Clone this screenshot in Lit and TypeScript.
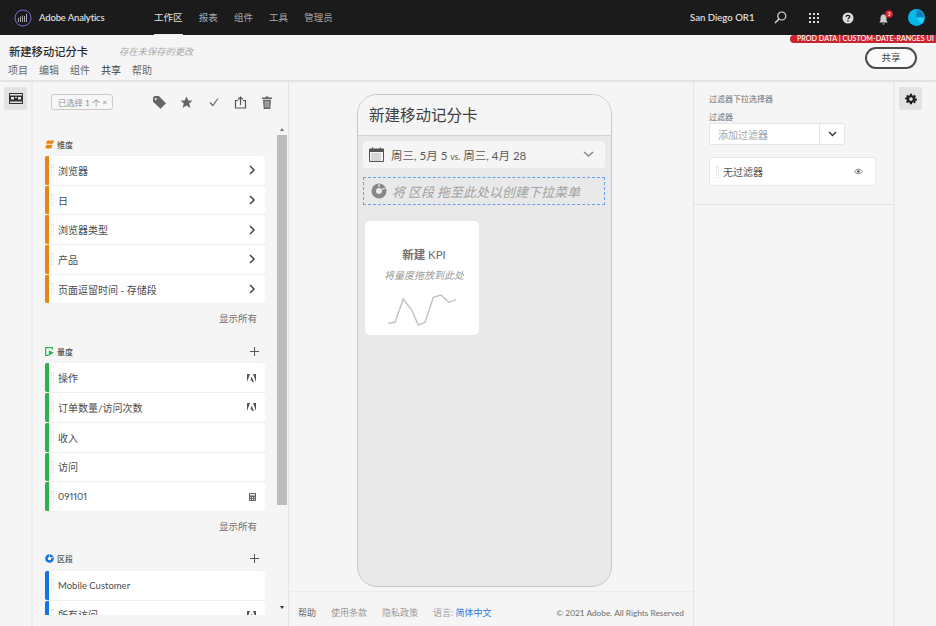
import { LitElement, html, css, svg } from "lit";
import { customElement } from "lit/decorators.js";

const chevron = html`<svg width="8" height="10" viewBox="0 0 8 10"><path d="M2 1l4 4-4 4" fill="none" stroke="#444" stroke-width="1.500"/></svg>`;
const adobe = html`<svg width="9" height="8" viewBox="0 0 9 8"><path d="M0 0h3L0 8zM9 0H6l3 8zM4.500 2.500L7 8H5.400l-.6-1.600H3.400z" fill="#555"/></svg>`;
const calc = html`<svg width="7" height="8" viewBox="0 0 7 8"><path d="M0 0h7v8H0z" fill="#666"/><path d="M1 1h5v1.500H1zM1 4h1v1H1zM3 4h1v1H3zM5 4h1v1H5zM1 6h1v1H1zM3 6h1v1H3zM5 6h1v1H5z" fill="#eee"/></svg>`;

const sections = [
  {
    name: "维度",
    color: "#e68619",
    add: false,
    more: true,
    items: ["浏览器", "日", "浏览器类型", "产品", "页面逗留时间 - 存储段"].map((t) => ({ t, icon: chevron })),
  },
  {
    name: "量度",
    color: "#2db24d",
    add: true,
    more: true,
    items: [
      { t: "操作", icon: adobe },
      { t: "订单数量/访问次数", icon: adobe },
      { t: "收入", icon: null },
      { t: "访问", icon: null },
      { t: "091101", icon: calc },
    ],
  },
  {
    name: "区段",
    color: "#1473e6",
    add: true,
    more: false,
    items: [
      { t: "Mobile Customer", icon: null },
      { t: "所有访问", icon: adobe },
    ],
  },
];

const sectionIcons = [
  svg`<path d="M3 .5h5.500c.5 0 .5 .5 .3 1L8 3.800H1.800C1 3.800 1 3 1.300 2.400 1.600 1.300 2 .5 3 .5z" fill="#e68619"/><path d="M1.500 4.800H7.500L6.800 7c-.3 1-1 1.500-2 1.500H1.500C.5 8.500 .2 8 .5 7z" fill="#e68619"/>`,
  svg`<path d="M7.500 2.500V.7H.7v7.600h3" fill="none" stroke="#2db24d" stroke-width="1.200"/><path d="M3.800 3.200L8.800 5.800 3.800 8.800z" fill="#2db24d"/>`,
  svg`<circle cx="4.500" cy="4.500" r="4.300" fill="#1473e6"/><circle cx="4.500" cy="4.500" r="1.700" fill="#fff"/><path d="M4.500 .5v2M8 3L6 4" stroke="#fff" stroke-width=".8"/>`,
];

// Latin labels run narrower than the CJK ones in the reference
const isLatin = (t: string) => /^[\x20-\x7e]+$/.test(t);

@customElement("app-root")
export class AppRoot extends LitElement {
  static styles = css`
    :host {
      display: block;
      width: 936px;
      height: 626px;
      overflow: hidden;
      position: relative;
      font-family: "Lato", "Noto Sans CJK SC", sans-serif;
      background: #f5f5f5;
      color: #4b4b4b;
    }
    .nav {
      height: 35px;
      background: #1b1b1b;
      display: flex;
      align-items: center;
      padding: 0 11px 0 14px;
      box-sizing: border-box;
      color: #a8a8a8;
    }
    .brand {
      color: #e8e8e8;
      font-size: 9.500px;
      letter-spacing: -0.150px;
      margin-left: 7px;
      width: 115px;
      font-weight: 500;
    }
    .tabs {
      display: flex;
      gap: 16.200px;
      height: 35px;
    }
    .tab {
      line-height: 35px;
      box-sizing: border-box;
      height: 35px;
      font-size: 9.500px;
    }
    .tab.on {
      color: #e3e3e3;
      border-bottom: 1px solid #eee;
    }
    .navright {
      margin-left: auto;
      display: flex;
      align-items: center;
      color: #e8e8e8;
    }
    .org {
      width: 84px;
      font-size: 9.600px;
      font-weight: 500;
    }
    .navright svg {
      display: block;
    }
    .navright .search {
      margin-right: 22px;
    }
    .navright .apps {
      margin-right: 23px;
    }
    .navright .qm {
      margin-right: 24px;
    }
    .navright .bell {
      margin-right: 14px;
    }
    .ribbon {
      position: absolute;
      right: 0;
      top: 35px;
      width: 146px;
      height: 8px;
      background: #c8242f;
      border-radius: 4px 0 0 4px;
      color: #fff;
      font-size: 7.200px;
      line-height: 8px;
      padding-left: 7px;
      box-sizing: border-box;
      white-space: nowrap;
      font-weight: 500;
    }
    .sub {
      height: 47px;
      box-sizing: border-box;
      border-bottom: 2px solid #e3e3e3;
      padding: 8px 8px 0 8px;
      display: flex;
      position: relative;
    }
    .titlerow {
      display: flex;
      align-items: center;
      height: 16px;
    }
    .title {
      font-size: 11.300px;
      font-weight: 500;
      color: #2c2c2c;
      margin-left: 1px;
      width: 110px;
    }
    .unsaved {
      font-size: 9.300px;
      font-style: italic;
      color: #a9a9a9;
    }
    .menu {
      display: flex;
      gap: 11px;
      font-size: 10px;
      color: #666;
      margin-top: 4px;
      line-height: 14px;
    }
    .menu .on {
      color: #3b3b3b;
    }
    .share {
      margin: 4px 11px 0 auto;
      width: 52px;
      height: 22px;
      box-sizing: border-box;
      border: 2px solid #4b4b4b;
      border-radius: 11px;
      font-size: 9.500px;
      line-height: 18px;
      text-align: center;
      color: #444;
      background: #fafafa;
    }
    .main {
      display: flex;
      height: 544px;
    }
    .rail {
      width: 33px;
      box-sizing: border-box;
      border-right: 2px solid #ececec;
      padding: 5px 4px;
    }
    .railr {
      width: 43px;
      box-sizing: border-box;
      border-left: 2px solid #ececec;
      padding: 5px 4px;
    }
    .railbtn {
      width: 23px;
      height: 23px;
      background: #e3e3e3;
      border-radius: 2px;
      display: flex;
      align-items: center;
      justify-content: center;
    }
    .left {
      width: 256px;
      box-sizing: border-box;
      border-right: 1px solid #e3e3e3;
      position: relative;
      height: 544px;
    }
    .tools {
      display: flex;
      align-items: center;
      height: 16px;
      padding: 12px 0 0 18px;
    }
    .chip {
      width: 62px;
      height: 16px;
      box-sizing: border-box;
      border: 1px solid #c9c9c9;
      border-radius: 3px;
      font-size: 8.300px;
      color: #8d8d8d;
      display: flex;
      align-items: center;
      justify-content: space-between;
      padding: 0 5px 0 6px;
      background: #f7f7f7;
    }
    .toolicons {
      margin-left: 40px;
      display: flex;
      gap: 14px;
      align-items: center;
    }
    .toolicons .check {
      margin-left: 1px;
    }
    .scroller {
      height: 478px;
      margin-top: 27px;
      overflow: hidden;
      padding-left: 12px;
      width: 232px;
      box-sizing: border-box;
    }
    .secthead {
      display: flex;
      align-items: center;
      height: 14px;
      font-size: 8px;
      color: #555;
      font-weight: 500;
      gap: 3px;
    }
    .plus {
      margin-left: auto;
      display: block;
      margin-right: 6px;
    }
    .list {
      margin-top: 5px;
      display: flex;
      flex-direction: column;
      gap: 1px;
    }
    .row {
      height: 28.700px;
      background: #fff;
      border-left: 4px solid #e68619;
      border-radius: 2px;
      display: flex;
      align-items: center;
      font-size: 10px;
      color: #4b4b4b;
      padding: 0 9px 0 3px;
      box-shadow: 0 0 1px #d5d5d5;
    }
    .row .grip {
      margin-right: 4px;
    }
    .row .label {
      flex: 1;
    }
    .row .label.latin {
      font-size: 9.500px;
      font-variant-numeric: proportional-nums;
    }
    .showall {
      text-align: right;
      font-size: 9.500px;
      color: #6e6e6e;
      height: 15px;
      line-height: 15px;
      margin: 8px 8px 18px 0;
    }
    .sb {
      position: absolute;
      right: 1px;
      top: 44px;
      width: 10px;
      height: 486px;
    }
    .sb .thumb {
      position: absolute;
      top: 9px;
      left: 0;
      width: 10px;
      height: 370px;
      background: #bdbdbd;
    }
    .sb .up,
    .sb .down {
      position: absolute;
      left: 3px;
      width: 0;
      height: 0;
      border-left: 2px solid transparent;
      border-right: 2px solid transparent;
    }
    .sb .up {
      top: 2px;
      border-bottom: 3px solid #777;
    }
    .sb .down {
      bottom: 3px;
      border-top: 3px solid #333;
    }
    .center {
      width: 404px;
      box-sizing: border-box;
      display: flex;
      flex-direction: column;
    }
    .stage {
      height: 510px;
      padding: 12px 0 0 68px;
      box-sizing: border-box;
      border-bottom: 1px solid #ececec;
    }
    .phone {
      width: 255px;
      height: 493px;
      box-sizing: border-box;
      border: 1.500px solid #c9c9c9;
      border-radius: 20px;
      background: #e9e9e9;
      overflow: hidden;
    }
    .phonehead {
      height: 40px;
      background: #f5f5f5;
      border-bottom: 1.500px solid #d2d2d2;
      font-size: 15.500px;
      line-height: 40px;
      padding-left: 11px;
      color: #404040;
    }
    .date {
      margin: 5px 6px 0 5px;
      height: 27px;
      background: #f5f5f5;
      border-radius: 3px;
      display: flex;
      align-items: center;
      padding: 0 11px 0 6px;
      font-size: 11.500px;
      color: #5a5a5a;
      gap: 7px;
    }
    .date small {
      font-size: 8.500px;
    }
    .date .caret {
      margin-left: auto;
    }
    .drop {
      margin: 9px 6px 0 5px;
      height: 28px;
      box-sizing: border-box;
      border: 1.500px dashed #5fa5f2;
      display: flex;
      align-items: center;
      padding-left: 7px;
      gap: 5px;
      font-size: 13px;
      font-style: italic;
      color: #a2a2a2;
    }
    .kpi {
      margin: 16px 0 0 7px;
      width: 114px;
      height: 114px;
      background: #fff;
      border-radius: 5px;
      display: flex;
      flex-direction: column;
      align-items: center;
      padding-top: 27px;
      box-sizing: border-box;
    }
    .kpi .name {
      font-size: 11.500px;
      color: #6e6e6e;
      line-height: 14px;
      margin-left: 4px;
    }
    .kpi b {
      font-weight: 700;
    }
    .kpi i {
      font-size: 10px;
      color: #9a9a9a;
      line-height: 14px;
      margin: 6px 0 0 4px;
    }
    .kpi svg {
      margin-top: 11px;
    }
    .foot {
      display: flex;
      align-items: center;
      height: 33px;
      font-size: 9px;
      color: #9a9a9a;
      padding: 8px 9px 0 9px;
      box-sizing: border-box;
      gap: 15px;
    }
    .foot .help {
      color: #666;
    }
    .foot .lang {
      color: #2f7ad8;
    }
    .foot .copy {
      margin-left: auto;
      color: #6e6e6e;
      font-size: 8.300px;
    }
    .right {
      width: 200px;
      box-sizing: border-box;
      border-left: 1px solid #e3e3e3;
    }
    .panel {
      height: 123px;
      box-sizing: border-box;
      border-bottom: 1px solid #e3e3e3;
      padding: 11px 16px 0 15px;
      font-size: 8px;
      color: #6e6e6e;
    }
    .panel .h {
      line-height: 12px;
    }
    .panel .l {
      line-height: 12px;
      margin-top: 6px;
    }
    .select {
      width: 136px;
      height: 22px;
      background: #fff;
      border: 1px solid #e6e6e6;
      border-radius: 2px;
      box-sizing: border-box;
      display: flex;
      align-items: center;
      font-size: 10px;
      color: #a5a5a5;
    }
    .select span {
      flex: 1;
      padding-left: 8px;
    }
    .select div {
      width: 24px;
      height: 20px;
      border-left: 1px solid #e6e6e6;
      display: flex;
      align-items: center;
      justify-content: center;
    }
    .nofilter {
      margin-top: 12px;
      width: 167px;
      height: 29px;
      background: #fff;
      border: 1px solid #e8e8e8;
      border-radius: 2px;
      box-sizing: border-box;
      display: flex;
      align-items: center;
      font-size: 10px;
      color: #555;
      padding: 0 12px 0 7px;
      gap: 4px;
    }
    .nofilter span {
      flex: 1;
    }
    .grip {
      width: 3px;
      height: 12px;
      border-left: 1px dotted #dcdcdc;
      border-right: 1px dotted #dcdcdc;
      box-sizing: border-box;
      flex: none;
      margin-left: -1px;
    }
  `;

  render() {
    return html`
      <div class="nav">
        <svg width="18" height="18" viewBox="0 0 18 18"><circle cx="9" cy="9" r="8" fill="none" stroke="#8464d8" stroke-width="1"/><path d="M4.500 13V9M6.500 13V7.500M8.500 13V6.500M10.500 13V7M12.500 13V5" stroke="#cfcfcf" stroke-width=".8"/></svg>
        <div class="brand">Adobe Analytics</div>
        <div class="tabs">
          <div class="tab on">工作区</div>
          <div class="tab">报表</div>
          <div class="tab">组件</div>
          <div class="tab">工具</div>
          <div class="tab">管理员</div>
        </div>
        <div class="navright">
          <div class="org">San Diego OR1</div>
          <svg class="search" width="13" height="13" viewBox="0 0 13 13"><circle cx="7.800" cy="5" r="4" fill="none" stroke="#ddd" stroke-width="1.200"/><path d="M5 8L1 12" stroke="#ddd" stroke-width="1.400"/></svg>
          <svg class="apps" width="10" height="10" viewBox="0 0 10 10" fill="#ddd"><path d="M0 0h2v2H0zM4 0h2v2H4zM8 0h2v2H8zM0 4h2v2H0zM4 4h2v2H4zM8 4h2v2H8zM0 8h2v2H0zM4 8h2v2H4zM8 8h2v2H8z"/></svg>
          <svg class="qm" width="12" height="12" viewBox="0 0 12 12"><circle cx="6" cy="6" r="5.500" fill="#ddd"/><path d="M4.200 4.700C4.200 2.800 7.800 2.800 7.800 4.700 7.800 6 6 6 6 7.300" fill="none" stroke="#1b1b1b" stroke-width="1.300"/><path d="M5.300 8.200h1.400v1.400H5.300z" fill="#1b1b1b"/></svg>
          <svg class="bell" width="16" height="16" viewBox="0 0 16 16"><path d="M1 12.500c1.500-1 1.500-2 1.500-4.500 0-2 1-3.500 3-3.800 2 .3 3 1.800 3 3.800 0 2.500 0 3.500 1.500 4.500zM4.300 13.500h2.400L5.500 15z" fill="#ccc"/><circle cx="11" cy="4" r="3.800" fill="#e0262f"/><path d="M10 2.500h2v3h-2M10.500 4H12" fill="none" stroke="#fff" stroke-width=".6"/></svg>
          <svg width="17" height="17" viewBox="0 0 17 17"><circle cx="8.500" cy="8.500" r="8.500" fill="#06b8ea"/><path d="M8.500 8.500V1a7.500 7.500 0 0 1 7.500 7.500z" fill="#1280b8"/><path d="M8.500 8.500H16A7.500 7.500 0 0 1 13 14.500z" fill="#25d3f5"/></svg>
        </div>
      </div>
      <div class="ribbon">PROD DATA | CUSTOM-DATE-RANGES UI</div>
      <div class="sub">
        <div>
          <div class="titlerow"><span class="title">新建移动记分卡</span><span class="unsaved">存在未保存的更改</span></div>
          <div class="menu"><span>项目</span><span>编辑</span><span>组件</span><span class="on">共享</span><span>帮助</span></div>
        </div>
        <div class="share">共享</div>
      </div>
      <div class="main">
        <div class="rail">
          <div class="railbtn">
            <svg width="14" height="11" viewBox="0 0 14 11"><path d="M0 0h14v11H0z" fill="#333"/><path d="M1 1h12v1.500H1zM1 8.500h12V10H1z" fill="#e3e3e3"/><path d="M2 4h3v2.500H2zM6 4h2v1H6zM9 4h3v2.500H9z" fill="#e3e3e3"/></svg>
          </div>
        </div>
        <div class="left">
          <div class="tools">
            <div class="chip"><span>已选择 1 个</span><span>×</span></div>
            <div class="toolicons">
              <svg width="13" height="13" viewBox="0 0 13 13"><path d="M0 1.500L1.500 0h4.300L13 7.200 7.500 12.800 0 5.800zM2.700 2a1 1 0 1 0 .01 0z" fill="#666" fill-rule="evenodd"/></svg>
              <svg width="13" height="13" viewBox="0 0 13 13"><path d="M6.500 .5l1.800 4h4.200l-3.300 2.900 1.200 4.600-3.900-2.500L2.600 12l1.200-4.600L.5 4.500h4.200z" fill="#666"/></svg>
              <svg class="check" width="12" height="12" viewBox="0 0 12 12"><path d="M2 6.500l2.800 3L10 2.500" fill="none" stroke="#666" stroke-width="1.200"/></svg>
              <svg width="13" height="13" viewBox="0 0 13 13"><path d="M4 4.500H1.500v7.500h10V4.500H9" fill="none" stroke="#555" stroke-width="1.200"/><path d="M6.500 9V1.500M4.300 3.500l2.200-2.400 2.200 2.400" fill="none" stroke="#555" stroke-width="1.200"/></svg>
              <svg width="12" height="13" viewBox="0 0 12 13"><path d="M1 1.500h3.500V.5h3v1H11v1.500H1zM2 3.800h8L9.300 13H2.700z" fill="#666"/><path d="M4.300 5v6.500M6 5v6.500M7.700 5v6.500" stroke="#f5f5f5" stroke-width=".6"/></svg>
            </div>
          </div>
          <div class="scroller">
            ${sections.map(
              (s, i) => html`
                <div class="secthead">
                  <svg width="9" height="9" viewBox="0 0 9 9">${sectionIcons[i]}</svg>
                  <span>${s.name}</span>
                  ${s.add
                    ? html`<svg class="plus" width="9" height="9" viewBox="0 0 9 9"><path d="M4.500 0v9M0 4.500h9" stroke="#555" stroke-width="1"/></svg>`
                    : null}
                </div>
                <div class="list">
                  ${s.items.map(
                    (it) => html`<div class="row" style="border-left-color:${s.color}">
                      <div class="grip"></div>
                      <span class="label ${isLatin(it.t) ? "latin" : ""}">${it.t}</span>${it.icon}
                    </div>`
                  )}
                </div>
                ${s.more ? html`<div class="showall">显示所有</div>` : null}
              `
            )}
          </div>
          <div class="sb"><div class="up"></div><div class="thumb"></div><div class="down"></div></div>
        </div>
        <div class="center">
          <div class="stage">
            <div class="phone">
              <div class="phonehead">新建移动记分卡</div>
              <div class="date">
                <svg width="15" height="15" viewBox="0 0 15 15"><path d="M.5 2h14v12.500H.5z" fill="none" stroke="#555"/><path d="M.5 2h14v3H.5zM3 .5h1.200V3H3zM10.800 .5H12V3h-1.200z" fill="#555"/><path d="M2.500 7h10M2.500 9h10M2.500 11h10M2.500 13h10" stroke="#777" stroke-width=".8" stroke-dasharray="1.200 .8"/></svg>
                <span>周三, 5月 5 <small>vs.</small> 周三, 4月 28</span>
                <svg class="caret" width="11" height="7" viewBox="0 0 11 7"><path d="M1 1l4.500 4L10 1" fill="none" stroke="#888" stroke-width="1.500"/></svg>
              </div>
              <div class="drop">
                <svg width="16" height="16" viewBox="0 0 16 16"><circle cx="8" cy="8" r="7.500" fill="#888"/><circle cx="8" cy="8" r="3" fill="#e9e9e9"/><path d="M8 1v3M14 5l-3 1.500" stroke="#e9e9e9" stroke-width="1.200"/></svg>
                <span>将 区段 拖至此处以创建下拉菜单</span>
              </div>
              <div class="kpi">
                <div class="name"><b>新建</b> KPI</div>
                <i>将量度拖放到此处</i>
                <svg width="70" height="34" viewBox="0 0 70 34"><path d="M1.300 30.300L8 29.300 16.300 6 24.700 17 31.300 32 38 29.300 46.300 4.300 54 2 62 9.300 69 6.700" fill="none" stroke="#c0c0c0" stroke-width="1.400"/></svg>
              </div>
            </div>
          </div>
          <div class="foot">
            <span class="help">帮助</span><span>使用条款</span><span>隐私政策</span>
            <span>语言: <span class="lang">简体中文</span></span>
            <span class="copy">© 2021 Adobe. All Rights Reserved</span>
          </div>
        </div>
        <div class="right">
          <div class="panel">
            <div class="h">过滤器下拉选择器</div>
            <div class="l">过滤器</div>
            <div class="select">
              <span>添加过滤器</span>
              <div><svg width="9" height="6" viewBox="0 0 9 6"><path d="M1 1l3.500 3.500L8 1" fill="none" stroke="#333" stroke-width="1.400"/></svg></div>
            </div>
            <div class="nofilter">
              <div class="grip"></div>
              <span>无过滤器</span>
              <svg width="9" height="7" viewBox="0 0 9 7"><path d="M.5 3.500C2.500 .5 6.500 .5 8.500 3.500 6.500 6.500 2.500 6.500 .5 3.500z" fill="none" stroke="#777"/><circle cx="4.500" cy="3.500" r="1.300" fill="#555"/></svg>
            </div>
          </div>
        </div>
        <div class="railr">
          <div class="railbtn">
            <svg width="12" height="12" viewBox="-1 0 15 13"><path d="M5.300 0h2.400l.3 1.800 1.300.6L11 1.300l1.700 1.700-1.100 1.500.6 1.300 1.800.3v2.400l-1.800.3-.6 1.300 1.100 1.500L11 11.700l-1.700-1.100-1.300.6-.3 1.800H5.300L5 11.200l-1.300-.6L2 11.700.3 10l1.100-1.500-.6-1.300L-1 6.900V5l1.800-.4.6-1.300L.3 3 2 1.300l1.700 1.100L5 1.800zM6.500 4.300a2.200 2.200 0 1 0 .01 0z" fill="#222" fill-rule="evenodd"/></svg>
          </div>
        </div>
      </div>
    `;
  }
}
